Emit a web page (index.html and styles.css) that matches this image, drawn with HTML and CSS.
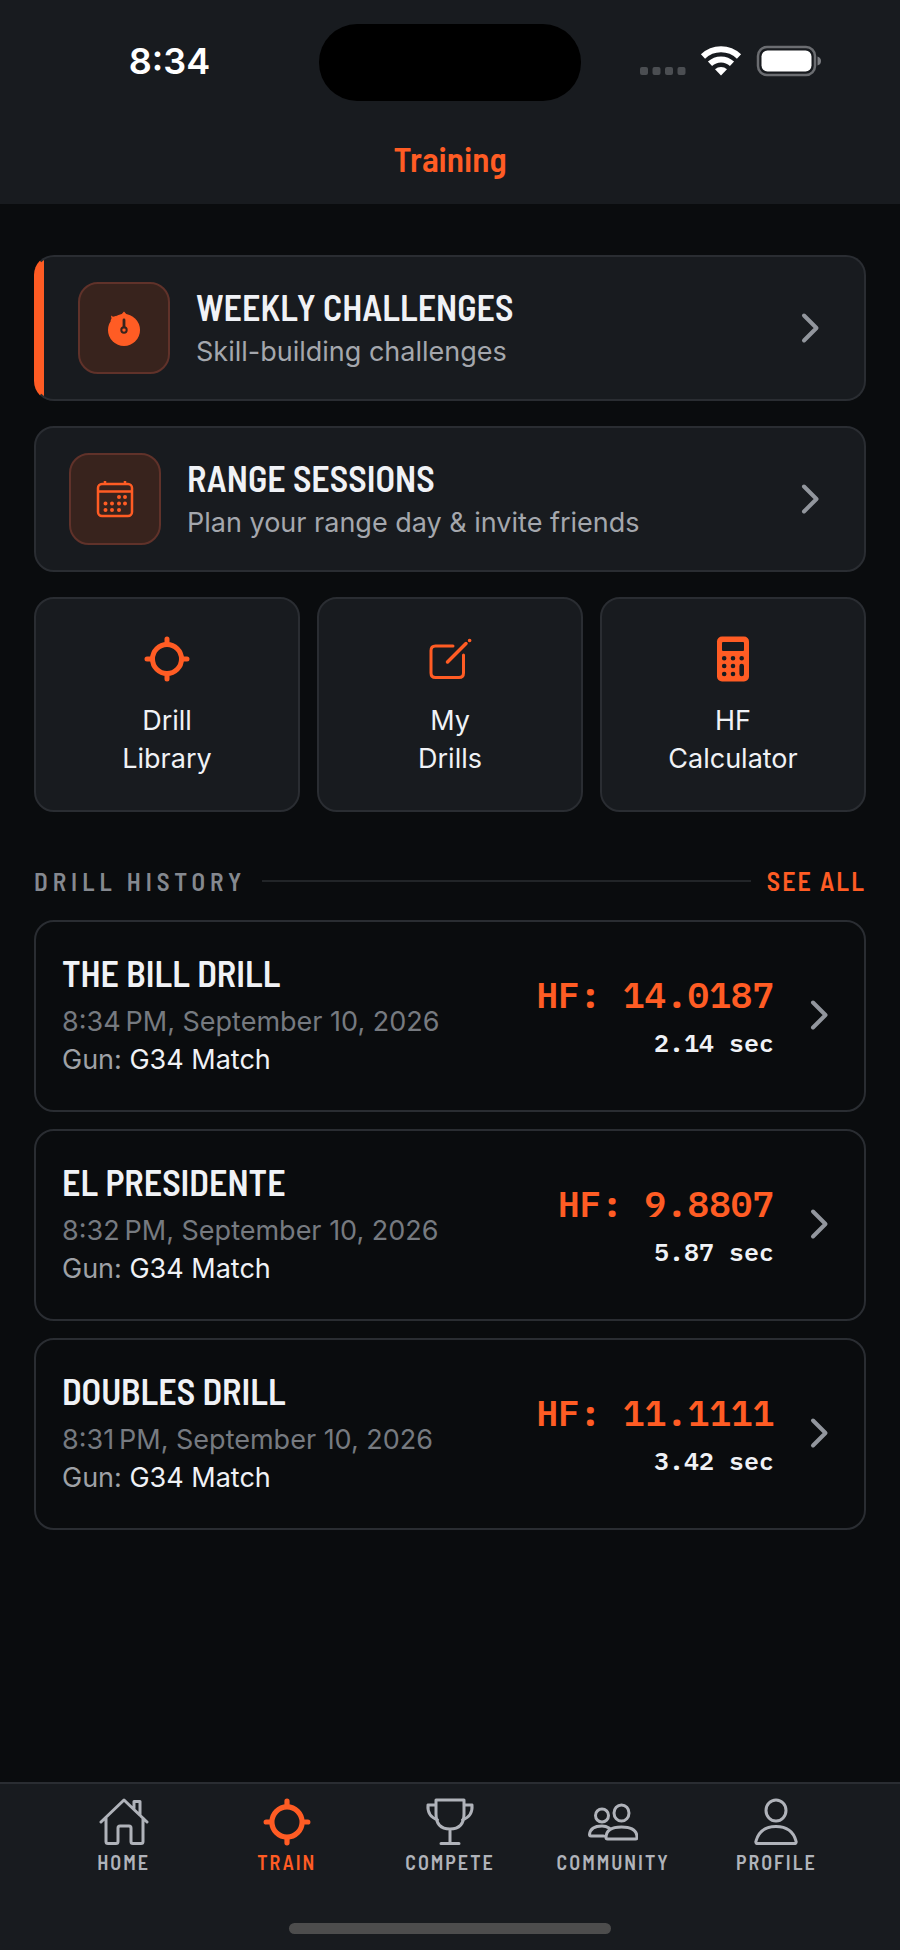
FILE: index.html
```html
<!DOCTYPE html>
<html lang="en">
<head>
<meta charset="utf-8">
<meta name="viewport" content="width=device-width, initial-scale=1">
<title>Training</title>
<link rel="stylesheet" href="styles.css">
</head>
<body>
<svg class="sprite" aria-hidden="true">
  <symbol id="chevron" viewBox="0 0 20 32">
    <path d="M3 3.500 15.500 16 3 28.500" fill="none" stroke="currentColor" stroke-width="4" stroke-linecap="round" stroke-linejoin="round"/>
  </symbol>
  <symbol id="crosshair" viewBox="0 0 48 48">
    <g fill="none" stroke="currentColor" stroke-width="5">
      <circle cx="24" cy="24" r="14.500"/>
      <path stroke-linecap="round" d="M24 4v5M24 39v5M4 24h5M39 24h5"/>
    </g>
  </symbol>
</svg>

<header class="header">
  <div class="status">
    <time class="clock">8:34</time>
    <span class="island"></span>
    <span class="indicators">
      <svg width="48" height="12" viewBox="0 0 48 12" fill="#4b4e52"><rect x="2" y="3" width="8" height="8" rx="2"/><rect x="14.500" y="3" width="8" height="8" rx="2"/><rect x="27" y="3" width="8" height="8" rx="2"/><rect x="39.500" y="3" width="8" height="8" rx="2"/></svg>
      <svg class="wifi" width="42" height="32" viewBox="0 0 42 32" fill="none" stroke="#fff">
        <path d="M3 11.500a26 26 0 0 1 36 0" stroke-width="6"/>
        <path d="M10 18.800a16 16 0 0 1 22 0" stroke-width="6"/>
        <path d="M21 30.500l-6-6.300a9 9 0 0 1 12 0z" fill="#fff" stroke="none"/>
      </svg>
      <svg width="66" height="32" viewBox="0 0 66 32">
        <rect x="2" y="2" width="57" height="28" rx="9" fill="none" stroke="#6b6d71" stroke-width="2.500"/>
        <rect x="5.500" y="5.500" width="50" height="21" rx="6" fill="#fff"/>
        <path d="M61.500 11.500q3.500 1 3.500 4.500t-3.500 4.500z" fill="#7c7e82"/>
      </svg>
    </span>
  </div>
  <h1 class="title">Training</h1>
</header>

<main class="content">
  <a class="card feature accent" href="#challenges">
    <span class="badge">
      <svg width="44" height="44" viewBox="0 0 44 44">
        <circle cx="22" cy="24" r="16" fill="#ff5c24"/>
        <path d="M22 5.500 26 10h-8zM9 9.500l2 1.300 4-1-5 6.200-1.500-1.500 1-2z" fill="#ff5c24"/>
        <circle cx="22" cy="24" r="2.700" fill="none" stroke="#38231d" stroke-width="2"/>
        <path d="M22 21V14" stroke="#38231d" stroke-width="2.800" stroke-linecap="round"/>
      </svg>
    </span>
    <span class="text">
      <strong class="name">WEEKLY CHALLENGES</strong>
      <span class="sub">Skill-building challenges</span>
    </span>
    <svg class="chevron"><use href="#chevron"/></svg>
  </a>

  <a class="card feature" href="#sessions">
    <span class="badge">
      <svg width="44" height="44" viewBox="0 0 44 44" fill="none" stroke="#ff5c24" stroke-width="2.500">
        <rect x="5" y="7" width="34" height="32" rx="4"/>
        <path d="M5 14.500h34M12 4v3M32 4v3"/>
        <path d="M26 20h0M32 20h0M12.500 26.500h0M19 26.500h0M26 26.500h0M32 26.500h0M12.500 33h0M19 33h0M26 33h0" stroke-width="4" stroke-linecap="round"/>
      </svg>
    </span>
    <span class="text">
      <strong class="name">RANGE SESSIONS</strong>
      <span class="sub">Plan your range day &amp; invite friends</span>
    </span>
    <svg class="chevron"><use href="#chevron"/></svg>
  </a>

  <div class="tiles">
    <a class="card tile" href="#library">
      <svg class="icon"><use href="#crosshair"/></svg>
      <span>Drill<br>Library</span>
    </a>
    <a class="card tile" href="#drills">
      <svg class="icon" viewBox="0 0 48 48" fill="none" stroke="currentColor" stroke-width="3" stroke-linecap="round">
        <path d="M27 11H9.500Q5 11 5 15.500V38q0 4.500 4.500 4.500H33q4.500 0 4.500-4.500V20"/>
        <path d="M21.500 27 40 8.500M43.500 5.500h.200" stroke-width="3.500"/>
      </svg>
      <span>My<br>Drills</span>
    </a>
    <a class="card tile" href="#calculator">
      <svg class="icon" viewBox="0 0 48 48">
        <rect x="8" y="1.500" width="32" height="45" rx="5" fill="currentColor"/>
        <rect x="13" y="7" width="22" height="9" rx="1" fill="#181b1f"/>
        <path d="M15.200 23.300h0M24 23.300h0M32.700 23.300h0M15.200 31h0M24 31h0M15.200 39h0M24 39h0M32.700 31v8" stroke="#181b1f" stroke-width="4.600" stroke-linecap="round"/>
      </svg>
      <span>HF<br>Calculator</span>
    </a>
  </div>

  <div class="section">
    <h2 class="heading">DRILL HISTORY</h2>
    <span class="rule"></span>
    <a class="more" href="#history">SEE ALL</a>
  </div>

  <div class="history">
    <a class="card entry" href="#bill">
      <span class="text">
        <strong class="name drill">THE BILL DRILL</strong>
        <span class="date">8:34&#8239;PM, September 10, 2026</span>
        <span class="gun">Gun: <b>G34 Match</b></span>
      </span>
      <span class="score"><span class="factor">HF: 14.0187</span><span class="time">2.14 sec</span></span>
      <svg class="chevron"><use href="#chevron"/></svg>
    </a>
    <a class="card entry" href="#presidente">
      <span class="text">
        <strong class="name drill">EL PRESIDENTE</strong>
        <span class="date">8:32&#8239;PM, September 10, 2026</span>
        <span class="gun">Gun: <b>G34 Match</b></span>
      </span>
      <span class="score"><span class="factor">HF: 9.8807</span><span class="time">5.87 sec</span></span>
      <svg class="chevron"><use href="#chevron"/></svg>
    </a>
    <a class="card entry" href="#doubles">
      <span class="text">
        <strong class="name drill">DOUBLES DRILL</strong>
        <span class="date">8:31&#8239;PM, September 10, 2026</span>
        <span class="gun">Gun: <b>G34 Match</b></span>
      </span>
      <span class="score"><span class="factor">HF: 11.1111</span><span class="time">3.42 sec</span></span>
      <svg class="chevron"><use href="#chevron"/></svg>
    </a>
  </div>
</main>

<footer class="footer">
  <nav class="tabs">
    <a class="tab" href="#home">
      <svg viewBox="0 0 50 50"><path d="M2 25 25 3l23 22M7 21v23.500q0 2 2 2h8q2 0 2-2V31q0-2 2-2h9q2 0 2 2v13.500q0 2 2 2h8q2 0 2-2V21M35 11.500V4.500h6V18"/></svg>
      HOME
    </a>
    <a class="tab active" href="#train">
      <svg viewBox="0 0 48 48"><use href="#crosshair"/></svg>
      TRAIN
    </a>
    <a class="tab" href="#compete">
      <svg viewBox="0 0 50 50"><path d="M11 3h28v14q0 15-14 15T11 17zM11 8H3q-1 11 9.500 15M39 8h8q1 11-9.500 15M25 32v14.500M16 46.500h18"/></svg>
      COMPETE
    </a>
    <a class="tab" href="#community">
      <svg viewBox="0 0 50 50"><circle cx="14" cy="18.500" r="6.500"/><ellipse cx="33.500" cy="16" rx="7.500" ry="8"/><path d="M18 40.500q0-10.500 15.500-10.500T49 40.500q0 1.500-1.500 1.500h-28q-1.500 0-1.500-1.500zM15.500 39H3q-1.500 0-1.500-1.500Q2.500 29 14 29q4 0 7 2"/></svg>
      COMMUNITY
    </a>
    <a class="tab" href="#profile">
      <svg viewBox="0 0 50 50"><ellipse cx="25" cy="13.500" rx="10" ry="10.500"/><path d="M5.500 46.500h39q1-1 .5-2.500Q41 29.500 25 29.500T5 44q-.5 1.500.5 2.500z"/></svg>
      PROFILE
    </a>
  </nav>
  <span class="home-indicator"></span>
</footer>
</body>
</html>
```
FILE: styles.css
```css
:root {
  --orange: #ff5c24;
  --surface: #181b1f;
  --line: #2a2d32;
  --condensed: "Barlow Semi Condensed", "Barlow Condensed", "Roboto Condensed", Roboto, sans-serif;
}

* { box-sizing: border-box; }

body {
  margin: 0;
  min-height: 100vh;
  display: flex;
  flex-direction: column;
  background: #0a0c0e;
  color: #f0f2f6;
  font: 400 27px/38px Inter, sans-serif;
}

a { color: inherit; text-decoration: none; }
svg { display: block; flex: none; }
.sprite { display: none; }

.header {
  min-height: 204px;
  padding-top: 24px;
  background: var(--surface);
}

.status {
  display: grid;
  grid-template-columns: 1fr 262px 1fr;
  align-items: center;
}

.clock {
  padding: 0 0 4px 20px;
  text-align: center;
  color: #fff;
  font-size: 36px;
  font-weight: 600;
}

.island { height: 77px; border-radius: 38px; background: #000; }

.indicators {
  display: flex;
  align-items: center;
  justify-content: flex-end;
  gap: 14px;
  padding: 0 78px 4px 0;
}
.indicators svg:first-child { margin-top: 18px; }

.title {
  margin: 35px 0 0;
  text-align: center;
  color: var(--orange);
  font: 600 35px/44px var(--condensed);
}

.content {
  flex: 1;
  display: flex;
  flex-direction: column;
  gap: 25px;
  padding: 51px 34px 40px;
}

.card {
  display: flex;
  align-items: center;
  border: 2px solid var(--line);
  border-radius: 20px;
  background: var(--surface);
}

.feature { gap: 26px; padding: 25px 43px 25px 33px; }

.accent {
  padding-left: 42px;
  border-left-color: var(--orange);
  background: linear-gradient(to right, var(--orange) 8px, var(--surface) 8px);
}

.badge {
  display: grid;
  place-items: center;
  width: 92px;
  height: 92px;
  border: 2px solid #60322a;
  border-radius: 20px;
  background: #38231d;
}

.text { flex: 1; display: flex; flex-direction: column; }

.name {
  margin-bottom: 4px;
  font: 600 36px/44px var(--condensed);
}
.drill { margin-bottom: 8px; }

.sub { color: #a4a7ad; }

.chevron { width: 20px; height: 32px; color: #92969d; }

.tiles {
  display: grid;
  grid-template-columns: repeat(3, 1fr);
  gap: 17px;
}

.tile {
  flex-direction: column;
  gap: 19px;
  padding: 36px 10px 32px;
  text-align: center;
}

.icon { width: 48px; height: 48px; color: var(--orange); }

.section {
  display: flex;
  align-items: center;
  gap: 16px;
  margin-top: 30px;
  font: 600 26px/28px var(--condensed);
}

.heading { margin: 0; font: inherit; font-size: 25px; color: #858990; letter-spacing: 5px; }
.rule { flex: 1; height: 2px; background: #222528; }
.more { color: var(--orange); letter-spacing: 2px; }

.history { display: flex; flex-direction: column; gap: 17px; }

.entry { gap: 36px; padding: 29px 34px 31px 26px; background: #0a0c0e; }

.date { color: #767a80; }
.gun { color: #9ea1a6; }
.gun b { color: #f0f2f6; font-weight: 400; }

.score {
  display: flex;
  flex-direction: column;
  gap: 4px;
  margin-top: 8px;
  text-align: right;
  font: 600 25px/44px "IBM Plex Mono", "Liberation Mono", monospace;
}
.factor { color: var(--orange); font-size: 36px; }

.footer {
  display: flex;
  flex-direction: column;
  align-items: center;
  gap: 47px;
  padding: 13px 42px 16px;
  border-top: 2px solid var(--line);
  background: var(--surface);
}

.tabs {
  align-self: stretch;
  display: grid;
  grid-template-columns: repeat(5, 1fr);
}

.tab {
  display: flex;
  flex-direction: column;
  align-items: center;
  gap: 1px;
  color: #b0b3ba;
  font: 600 20px/28px var(--condensed);
  letter-spacing: 2px;
}

.tab svg {
  width: 50px;
  height: 50px;
  fill: none;
  stroke: currentColor;
  stroke-width: 3;
  stroke-linecap: round;
  stroke-linejoin: round;
}
.active { color: var(--orange); }

.home-indicator {
  width: 322px;
  height: 11px;
  border-radius: 6px;
  background: #4d4d4d;
}
```
